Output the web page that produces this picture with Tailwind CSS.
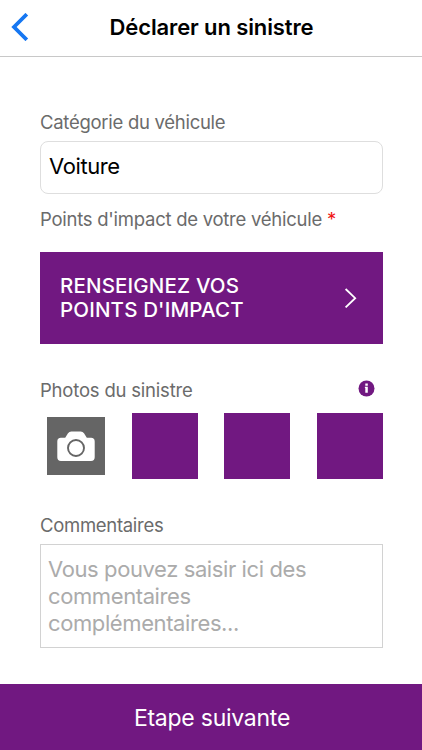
<!DOCTYPE html>
<html lang="fr">
<head>
    <meta charset="UTF-8">
    <meta name="viewport" content="width=device-width, initial-scale=1.0">
    <title>Déclarer un sinistre</title>
    <script src="https://cdn.jsdelivr.net/npm/@tailwindcss/browser@4"></script>
</head>
<body class="bg-white font-['Inter','Liberation_Sans',sans-serif]">
    <div class="flex flex-col w-full h-[750px] overflow-hidden">
        <!-- En-tête -->
        <header class="grid grid-cols-[60px_1fr_60px] items-center h-[57px] shrink-0 border-b border-[#c8c8c8]">
            <a href="#" aria-label="Retour" class="pl-[11px] pb-[3px]">
                <svg class="w-[18px] h-[28px]" viewBox="0 0 18 28" fill="none" stroke="#1677f2" stroke-width="3.8">
                    <path d="M15.8 1.2 3 14 15.8 26.8" />
                </svg>
            </a>
            <h1 class="text-center text-[22px] leading-[28px] pl-px pb-[2px] font-semibold text-black whitespace-nowrap tracking-[-0.12px]">Déclarer un sinistre</h1>
        </header>

        <!-- Formulaire -->
        <main class="grow pl-[40px] pr-[39px] pt-[53px]">
            <label class="block h-[31px] text-[18.5px] leading-[24px] text-[#6b6b6b] whitespace-nowrap tracking-[-0.28px]"><span>Catégorie du véhicule</span></label>
            <div class="flex items-center h-[53px] border border-[#dedede] rounded-[8px] px-[8px] pb-[2px] text-[22px] tracking-[-0.4px] text-black"><span>Voiture</span></div>

            <label class="block mt-[13px] h-[45px] text-[18.5px] leading-[24px] text-[#6b6b6b] whitespace-nowrap tracking-[-0.26px]"><span>Points d'impact de votre véhicule</span> <span class="text-[#f01515]">*</span></label>
            <button type="button" class="flex items-center justify-between w-full h-[92px] bg-[#711881] pl-[20px] pr-[26px] text-left text-white">
                <span class="text-[20.5px] leading-[24px] tracking-[0.16px] font-medium whitespace-nowrap">RENSEIGNEZ VOS<br>POINTS D'IMPACT</span>
                <svg class="w-[13px] h-[20px]" viewBox="0 0 13 20" fill="none" stroke="currentColor" stroke-width="1.8">
                    <path d="M1.6 1 11.2 10.2 1.6 19.4" />
                </svg>
            </button>

            <!-- Photos -->
            <div class="flex items-start justify-between mt-[34px] h-[35px] pr-[8px]">
                <span class="text-[18.5px] leading-[24px] text-[#6b6b6b] whitespace-nowrap tracking-[-0.2px]">Photos du sinistre</span>
                <svg class="w-[17px] h-[17px] mt-[2px]" viewBox="0 0 17 17">
                    <circle cx="8.5" cy="8.5" r="8" fill="#711881" />
                    <path fill="#fff" d="M7.3 3.6h2.5v2.1H7.3zM6.9 6.7h2.9v6H7.3V8h-.4z" />
                </svg>
            </div>
            <div class="flex items-center justify-between h-[66px]">
                <div class="flex items-center justify-center w-[58px] h-[58px] ml-[7px] bg-[#656565]">
                    <svg class="w-[38px] h-[30px]" viewBox="0 0 38 30">
                        <path fill="#fff" d="M4 6.7h4.2L11 2.2Q12.2.5 14.3.5h9.4q2.1 0 3.3 1.7l2.8 4.5H34q3.7 0 3.7 3.7v15.9q0 3.7-3.7 3.7H4q-3.7 0-3.7-3.7V10.4q0-3.7 3.7-3.7z" />
                        <circle cx="19" cy="17" r="8" fill="none" stroke="#656565" stroke-width="1.9" />
                    </svg>
                </div>
                <div class="w-[66px] h-[66px] bg-[#711881]"></div>
                <div class="w-[66px] h-[66px] bg-[#711881]"></div>
                <div class="w-[66px] h-[66px] bg-[#711881]"></div>
            </div>

            <!-- Commentaires -->
            <label class="block mt-[34px] h-[31px] text-[18.5px] leading-[24px] text-[#6b6b6b] tracking-[-0.3px]"><span>Commentaires</span></label>
            <div class="h-[104px] border-[1.5px] border-[#d2d2d2] pl-[7px] pt-[11px] text-[22px] leading-[27px] tracking-[-0.4px] text-[#ababab] whitespace-nowrap"><span>Vous pouvez saisir ici des<br>commentaires<br>complémentaires...</span></div>
        </main>

        <button type="button" class="h-[66px] shrink-0 pt-[2px] pl-[2px] bg-[#711881] text-white text-[23px] tracking-[-0.25px]"><span>Etape suivante</span></button>
    </div>
</body>
</html>
